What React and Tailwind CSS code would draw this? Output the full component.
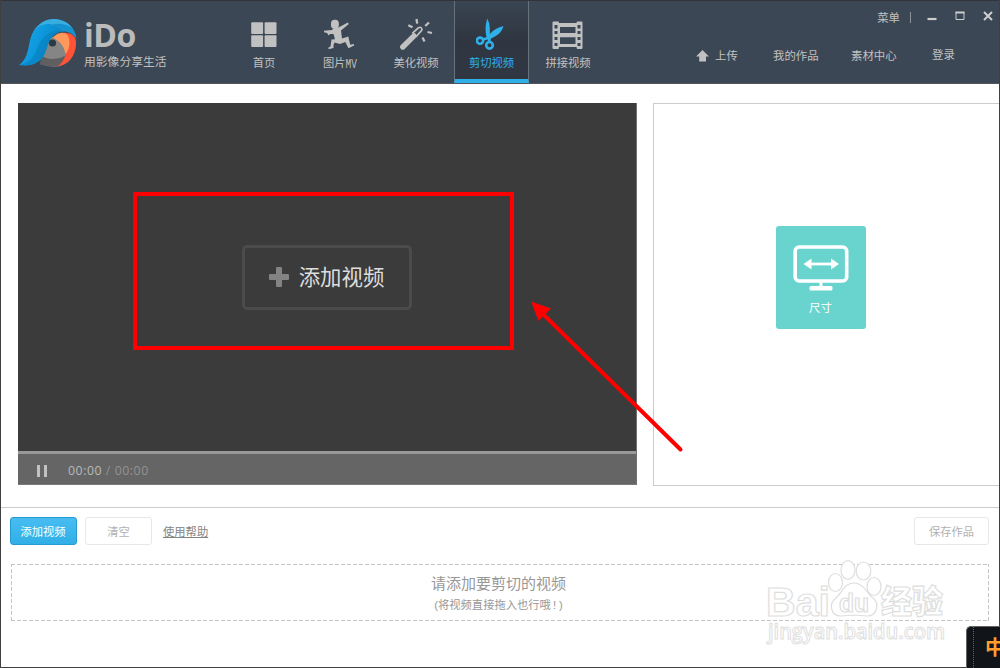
import React from "react";

const Logo = () => (
  <svg className="h-[50px] w-[60px] shrink-0" viewBox="0 0 60 50">
    <defs>
      <linearGradient id="hood" x1="0" y1="0.3" x2="1" y2="0.7">
        <stop offset="0" stopColor="#1aa6e6" />
        <stop offset="0.45" stopColor="#0c98dc" />
        <stop offset="1" stopColor="#0b7fbd" />
      </linearGradient>
    </defs>
    <path d="M30 20 L42 16 L48 34 L42 48 Q32 50 21 46Z" fill="#858585" />
    <path d="M23.500 38.500 Q35 44 47 37.500 L42 48 Q32 49.500 20.500 46Z" fill="#5f5f5f" />
    <path d="M44 15 C52 14 58 18 57 27 C56 38 50 47 38.500 48.500 C46 43 48 35 46 29Z" fill="#ff5338" />
    <path d="M34 20 C37 14.500 47 12 49.500 19 C51.500 26 50 32 46.500 36 C45 28 41 23 34 20Z" fill="#ff985b" />
    <path d="M13 17 C18 5 28 0.500 36 1 C48 2 57 10 57.500 21 C53 13.500 45 12 38 15 C34 17 31 20 30 24Z" fill="#1593cf" />
    <path d="M14 14 C19 5 28 0.500 36 1 C43 1.500 50 5 53 10 C47 6 39 5 33 6.500 C27 5 20 8 14 14Z" fill="#38addf" />
    <path d="M0 47 C12 39 8 22 15 13 C22 4 35 5 43 13 C32 15 30 23 27 32 C24 44 14 49 0 47Z" fill="url(#hood)" />
    <path d="M0 47 C17 44 17 30 22 23 C27 15 35 12 43 13 C32 16 30 24 27 33 C23 44 13 49 0 47Z" fill="#087fbd" fillOpacity="0.6" />
    <circle cx="33.500" cy="25" r="3.600" fill="#2d3942" />
  </svg>
);

const HomeIcon = () => (
  <svg className="size-8" viewBox="0 0 32 32" fill="currentColor">
    <rect x="3.200" y="4.300" width="11.900" height="11.700" rx="1" />
    <rect x="16.600" y="4.300" width="11.900" height="11.700" rx="1" />
    <rect x="3.200" y="17.300" width="11.900" height="11.700" rx="1" />
    <rect x="16.600" y="17.300" width="11.900" height="11.700" rx="1" />
  </svg>
);

const RunnerIcon = () => (
  <svg className="size-8" viewBox="0 0 32 32" fill="currentColor">
    <rect x="7" y="1.700" width="7.800" height="9" rx="3.500" />
    <path d="M-0.500 12.800 L8 12 L9.500 10.300 L14.500 9.500 L23.800 4.500 L24.800 6 L17 12.500 L18 20.500 L24.300 18.500 L26.200 26.800 L30 26 L30 27.500 L24.500 30.300 L21.300 24 L16 26 L10.500 24.500 L9.500 27 L9.500 30 L4.500 31.200 L4.500 29.500 L6.500 28.500 L7.500 21.500 L11 21.200 L9.500 16 L6 16 L4.500 17.500 L3.200 15 L-0.500 14.200Z" />
  </svg>
);

const WandIcon = () => (
  <svg className="size-8 overflow-visible" viewBox="0 0 32 32" fill="none" stroke="currentColor">
    <path d="M2.800 29 L14 17.900" strokeWidth="5.400" strokeLinecap="round" />
    <path d="M12.300 15.300 L18.200 10 Q20.600 8.500 21.300 10 Q22.800 11.500 21 13.200 L15.800 19" strokeWidth="1.700" />
    <path d="M16.500 1 L17.200 5.700 M8.300 7.200 L12.500 9.300 M29 4.500 L25.200 8 M27.500 14 L32 15 M22.500 19.500 L24.500 23.400" strokeWidth="2.300" />
  </svg>
);

const ScissorsIcon = () => (
  <svg className="size-8" viewBox="0 0 32 32" fill="none" stroke="currentColor">
    <path d="M11.200 0.500 Q14 5 13.800 10 L13.800 16 Q19 10 27.500 8 Q26 14.500 19 18.600 L14 21 L11 21 Q8 11 11.200 0.500Z" fill="currentColor" stroke="none" />
    <circle cx="4" cy="22.700" r="3.100" strokeWidth="2.600" />
    <circle cx="13.500" cy="27.300" r="3.300" strokeWidth="2.600" />
    <path d="M7 21.500 L12 20 M13 25 L13.500 19.500" strokeWidth="2.800" />
  </svg>
);

const FilmIcon = () => (
  <svg className="size-8" viewBox="0 0 32 32">
    <path fillRule="evenodd" fill="currentColor" d="M1.500 3.500 H6.500 L7 5 H24.500 L25 3.500 H29.500 Q30.500 3.500 30.500 4.500 V30 Q30.500 31 29.500 31 H25 L24.500 29 H7 L6.500 31 H1.500 Q0.500 31 0.500 30 V4.500 Q0.500 3.500 1.500 3.500Z M8 9 V15 H23.500 V9Z M8 19.300 V26 H23.500 V19.300Z M2.500 7 V10.500 H5.500 V7Z M2.500 13 V16 H5.500 V13Z M2.500 19 V22 H5.500 V19Z M2.500 25 V28 H5.500 V25Z M25.500 7 V10.500 H28.500 V7Z M25.500 13 V16 H28.500 V13Z M25.500 19 V22 H28.500 V19Z M25.500 25 V28 H28.500 V25Z" />
  </svg>
);

const NavItem = ({ icon, label, active }) => (
  <button
    className={
      active
        ? "flex h-[82px] w-[75px] flex-col items-center border-x border-b-[4px] border-x-[#68727b] border-b-[#2eb0e9] bg-linear-to-b from-[#394552] via-[#2f3641] to-[#303742] pt-[17px] text-[#2eb0e9]"
        : "flex h-[82px] w-[76px] flex-col items-center pt-[17px] text-[#c1c1c1]"
    }
  >
    {icon}
    <span className="mt-[5px] whitespace-nowrap text-[11.3px] leading-4">{label}</span>
  </button>
);

const Header = () => (
  <header className="flex h-[84px] shrink-0 border-t border-b border-t-[#343338] border-b-[#51555b] bg-[#3b4754] text-[#c1c1c1]">
    <div className="flex w-[225px] pl-[18px] pt-[17px]">
      <Logo />
      <div className="ml-[6px] flex flex-col">
        <b className="-ml-px -mt-px font-['Open_Sans','Noto_Sans',sans-serif] text-[32px] leading-[36px] tracking-[-0.500px] text-[#bbbbbb]">iDo</b>
        <span className="-ml-px mt-px whitespace-nowrap text-[11.8px] leading-4">用影像分享生活</span>
      </div>
    </div>
    <nav className="flex">
      <NavItem icon={<HomeIcon />} label="首页" />
      <NavItem icon={<RunnerIcon />} label={<>图片<span className="inline-block origin-left scale-y-125 font-['Liberation_Mono',monospace] text-[9.500px]">MV</span></>} />
      <NavItem icon={<WandIcon />} label="美化视频" />
      <NavItem active icon={<ScissorsIcon />} label="剪切视频" />
      <div className="pl-px"><NavItem icon={<FilmIcon />} label="拼接视频" /></div>
    </nav>
    <div className="flex flex-1 flex-col text-[11.4px] leading-4">
      <div className="flex h-[32px] items-center justify-end pr-[5px]">
        <span className="mt-px">菜单</span>
        <i className="ml-[10px] h-[11px] w-px bg-[#8c9299]" />
        <svg className="ml-[16px] h-[12px] w-[67px]" viewBox="0 0 67 12" fill="none" stroke="#cdcdcd">
          <path d="M0.500 8 H9.500" strokeWidth="2.200" />
          <path d="M29 1 V8.500 H37 V1" strokeWidth="1" />
          <path d="M28.500 1.500 H37.500" strokeWidth="2" />
          <path d="M57 1 L65 9 M65 1 L57 9" strokeWidth="2" />
        </svg>
      </div>
      <div className="flex pl-[90px] pt-[14px]">
        <span className="flex w-[77px] items-center gap-[6px]">
          <svg className="h-[12px] w-[13px]" viewBox="0 0 13 12" fill="currentColor"><path d="M6.500 0 L13 6.500 H10 V11.500 H3.200 V6.500 H0Z" /></svg>
          上传
        </span>
        <span className="mt-px w-[78px]">我的作品</span>
        <span className="mt-px w-[81px]">素材中心</span>
        <span>登录</span>
      </div>
    </div>
  </header>
);

const Workspace = () => (
  <main className="flex h-[423px] shrink-0 pl-[17px] pt-[19px]">
    <section className="flex h-[382px] w-[619px] flex-col border-r border-[#6f6f6f] bg-[#3b3b3b]">
      <div className="flex h-[348px] justify-center pr-[8px] pt-[89px]">
        <div className="flex h-[158px] w-[381px] items-center justify-center border-[4.800px] border-[#ff0000] pl-[7px] pt-[12px]">
          <button className="flex h-[65px] w-[170px] items-center justify-center gap-[10px] rounded-[5px] border-[3px] border-[#4b4b4b] text-[21.400px] text-[#dddddd]">
            <svg className="size-[20px]" viewBox="0 0 20 20"><path d="M8 0 H12 Q13 0 13 1 V7 H19 Q20 7 20 8 V12 Q20 13 19 13 H13 V19 Q13 20 12 20 H8 Q7 20 7 19 V13 H1 Q0 13 0 12 V8 Q0 7 1 7 H7 V1 Q7 0 8 0Z" fill="#838383" /></svg>
            <span className="pt-[4px] leading-none">添加视频</span>
          </button>
        </div>
      </div>
      <div className="h-[3px] bg-[#999999]" />
      <div className="flex h-[31px] items-center border-b border-[#7b7b7b] bg-[#656565] pl-[19px] pt-[4px]">
        <i className="h-[12px] w-[3px] bg-[#c1c1c1]" />
        <i className="ml-[4px] h-[12px] w-[3px] bg-[#c1c1c1]" />
        <span className="ml-[21px] whitespace-pre font-['Open_Sans',sans-serif] text-[12.300px] tracking-[0.550px] text-[#929292]"><span className="text-[#b9b9b9]">00:00</span> / 00:00</span>
      </div>
    </section>
    <section className="ml-[16px] flex h-[383px] flex-1 border border-r-0 border-[#cccccc] pl-[122px] pt-[122px]">
      <button className="flex h-[103px] w-[90px] flex-col items-center rounded-[3px] bg-[#69d4cd] pr-px pt-[19px] text-[11.400px] leading-4 text-white">
        <svg className="h-[46px] w-[56px]" viewBox="0 0 56 46" fill="none" stroke="white">
          <rect x="2.200" y="2" width="51.500" height="34" rx="4" strokeWidth="3.600" />
          <path d="M28 37 V41 M18 42.700 H37" strokeWidth="3" />
          <rect x="16.500" y="41" width="23" height="4.500" rx="1.500" fill="white" stroke="none" />
          <path d="M16 19 H40" strokeWidth="2.800" />
          <path d="M10.500 19 L18.500 13.500 V24.500Z M46 19 L38 13.500 V24.500Z" fill="white" stroke="none" />
        </svg>
        <span className="mt-[9px]">尺寸</span>
      </button>
    </section>
  </main>
);

const Timeline = () => (
  <section className="flex flex-1 flex-col border-t border-[#cccccc] pl-[9px] pr-[10px] pt-[9px] text-[11.300px] leading-4">
    <div className="flex h-[28px] items-center">
      <button className="h-[28px] w-[67px] rounded-[3px] border border-[#239bd0] bg-linear-to-b from-[#47bdf2] to-[#30afe6] pr-px pt-px text-white">添加视频</button>
      <button className="ml-[8px] h-[28px] w-[67px] rounded-[3px] border border-[#e7e7e7] pt-px text-[#b1b1b1]">清空</button>
      <a className="ml-[11px] pt-px text-[#838383] underline underline-offset-1">使用帮助</a>
      <button className="ml-auto h-[28px] w-[75px] rounded-[3px] border border-[#e7e7e7] pt-px text-[#b1b1b1]">保存作品</button>
    </div>
    <div className="mt-[19px] ml-px flex h-[57px] flex-col items-center justify-center pr-[3px] pt-[2px] text-[#989898] [background-image:repeating-linear-gradient(90deg,#c5c5c5_0_4px,transparent_4px_6px),repeating-linear-gradient(90deg,#c5c5c5_0_4px,transparent_4px_6px),repeating-linear-gradient(0deg,#c5c5c5_0_4px,transparent_4px_6px),repeating-linear-gradient(0deg,#c5c5c5_0_4px,transparent_4px_6px)] [background-position:top,bottom,left,right] [background-repeat:no-repeat] [background-size:100%_1px,100%_1px,1px_100%,1px_100%]">
      <span className="text-[15px] leading-5">请添加要剪切的视频</span>
      <span className="mt-[3px] flex"><span>(</span><span>将视频直接拖入也行哦</span><span className="ml-[2px]">!</span><span className="ml-[3px]">)</span></span>
    </div>
  </section>
);

const Watermark = () => (
  <svg className="pointer-events-none absolute left-[760px] top-[555px] h-[98px] w-[195px]" viewBox="0 0 195 98" fill="white" stroke="#dedede" strokeWidth="1.200">
    <text x="6" y="61" fontFamily="Liberation Sans, sans-serif" fontWeight="700" fontSize="41" textLength="64" lengthAdjust="spacingAndGlyphs">Bai</text>
    <ellipse cx="75.500" cy="27.500" rx="7" ry="9" />
    <ellipse cx="88" cy="15" rx="7" ry="9.300" />
    <ellipse cx="103.500" cy="16" rx="7.300" ry="9" />
    <ellipse cx="114" cy="31.500" rx="7" ry="9" />
    <path d="M94 28 C104 28 107 39 113 43 C120 49 117 61 107 61 L94 60 L81 61 C71 61 68 49 76 43 C82 38 84 28 94 28Z" />
    <text x="79" y="57" fontFamily="Liberation Sans, sans-serif" fontWeight="700" fontSize="25" textLength="30" lengthAdjust="spacingAndGlyphs">du</text>
    <text x="121" y="58" fontFamily="Noto Sans CJK SC, sans-serif" fontWeight="900" fontSize="32" textLength="62" lengthAdjust="spacingAndGlyphs">经验</text>
    <text x="8" y="84" fontFamily="Open Sans, sans-serif" fontWeight="600" fontSize="21" strokeWidth="1" textLength="177" lengthAdjust="spacingAndGlyphs">jingyan.baidu.com</text>
  </svg>
);

export default function App() {
  return (
    <div className="relative h-[668px] w-[1000px] overflow-hidden bg-white font-['Liberation_Sans','Noto_Sans_CJK_SC',sans-serif]">
      <div className="flex h-full flex-col border-x border-b border-[#404040]">
        <Header />
        <Workspace />
        <Timeline />
      </div>
      <svg className="pointer-events-none absolute left-[525px] top-[295px] h-[165px] w-[165px]" viewBox="0 0 165 165">
        <path d="M19 20 L155.500 154.500" stroke="#ff0000" strokeWidth="4" strokeLinecap="round" />
        <path d="M6 6.500 L26 13.500 L13.500 26Z" fill="#ff0000" />
      </svg>
      <Watermark />
      <div className="absolute bottom-0 right-0 flex h-[42px] w-[34px] items-center overflow-hidden rounded-tl-[5px] border-l border-t border-[#656565] bg-[#111519] pl-[6px] font-bold text-[#ff9e30]">
        <i className="h-full w-px border-l border-dotted border-[#656565]" />
        <span className="ml-[11px] shrink-0 text-[20px] leading-none">中</span>
      </div>
    </div>
  );
}
